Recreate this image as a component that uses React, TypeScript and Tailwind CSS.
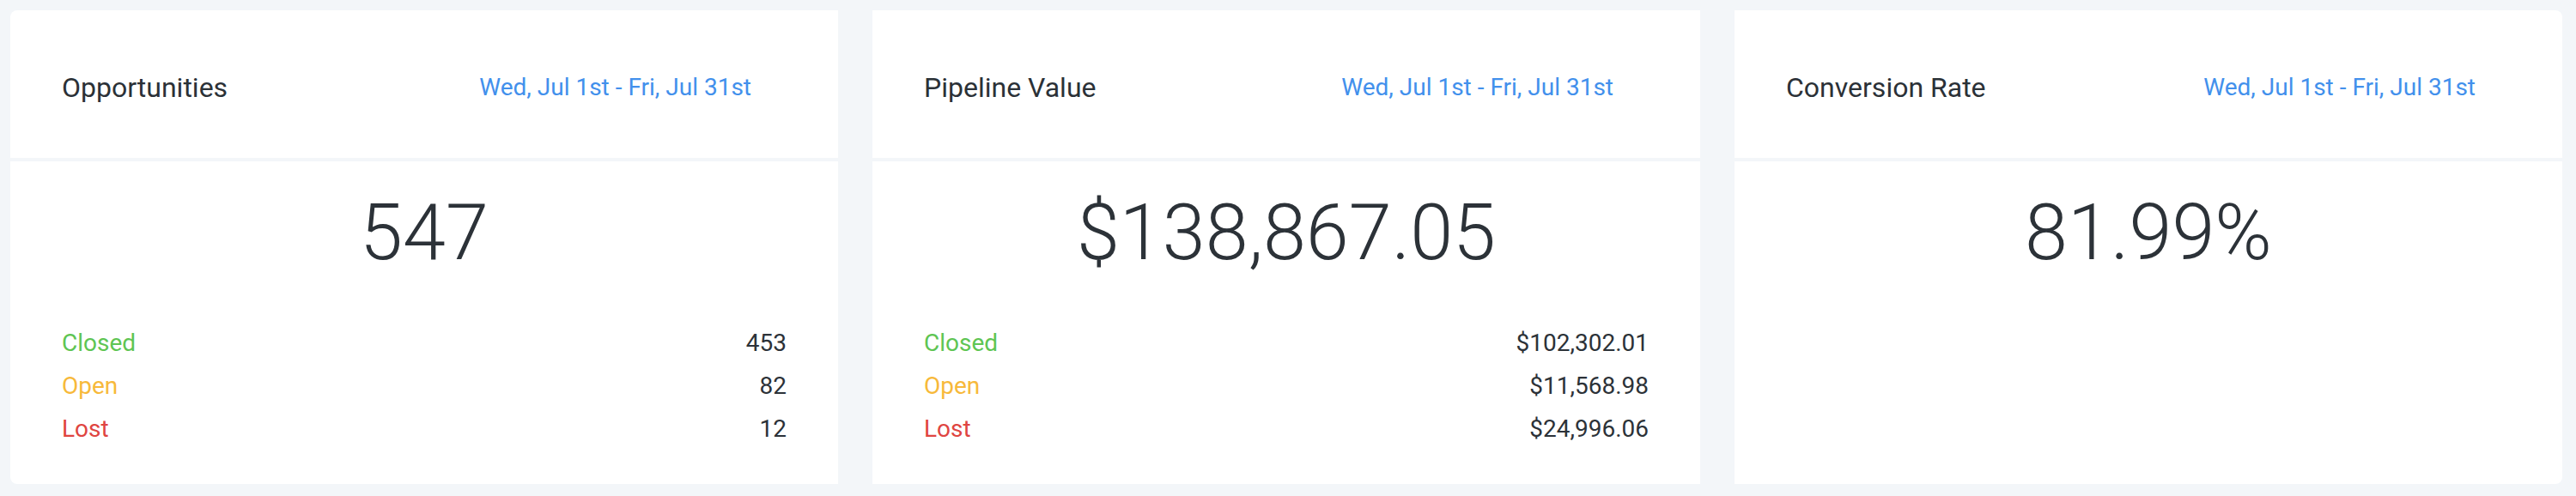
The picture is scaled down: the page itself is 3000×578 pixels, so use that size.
interface Row {
  label: string;
  value: string;
  color: string;
}

interface StatCard {
  title: string;
  range: string;
  total: string;
  rows: Row[];
}

const cards: StatCard[] = [
  {
    title: "Opportunities",
    range: "Wed, Jul 1st - Fri, Jul 31st",
    total: "547",
    rows: [
      { label: "Closed", value: "453", color: "text-[#5ec553]" },
      { label: "Open", value: "82", color: "text-[#f7b93a]" },
      { label: "Lost", value: "12", color: "text-[#df4541]" },
    ],
  },
  {
    title: "Pipeline Value",
    range: "Wed, Jul 1st - Fri, Jul 31st",
    total: "$138,867.05",
    rows: [
      { label: "Closed", value: "$102,302.01", color: "text-[#5ec553]" },
      { label: "Open", value: "$11,568.98", color: "text-[#f7b93a]" },
      { label: "Lost", value: "$24,996.06", color: "text-[#df4541]" },
    ],
  },
  {
    title: "Conversion Rate",
    range: "Wed, Jul 1st - Fri, Jul 31st",
    total: "81.99%",
    rows: [],
  },
];

export default function App() {
  return (
    <div className="w-[3000px] h-[578px] bg-[#f3f6f9] pt-[12px] pl-[12px] pr-[16px] font-['Roboto',sans-serif]">
      <div className="grid grid-cols-3 gap-[40px] h-[552px]">
        {cards.map((c, i) => (
          <div key={c.title} className="flex flex-col gap-[4px]">
            <div
              className={`h-[172px] bg-white flex items-center justify-between pt-[8px] pl-[60px] pr-[101px] ${
                i === 0 ? "rounded-tl-[8px]" : i === 2 ? "rounded-tr-[8px]" : ""
              }`}
            >
              <span className="text-[32px] leading-[38px] text-[#2b3137]">{c.title}</span>
              <span className="text-[28px] leading-[34px] text-[#4290ec]">{c.range}</span>
            </div>
            <div
              className={`flex-1 bg-white flex flex-col px-[60px] pt-[34px] ${
                i === 0 ? "rounded-bl-[8px]" : i === 2 ? "rounded-br-[8px]" : ""
              }`}
            >
              <div className="text-center text-[90px] leading-[100px] font-light text-[#2c3238]">{c.total}</div>
              {c.rows.length > 0 && (
                <div className="mt-[53px] flex flex-col">
                  {c.rows.map(r => (
                    <div key={r.label} className="flex justify-between h-[50px] leading-[50px] text-[28px]">
                      <span className={r.color}>{r.label}</span>
                      <span className="text-[#2c3238]">{r.value}</span>
                    </div>
                  ))}
                </div>
              )}
            </div>
          </div>
        ))}
      </div>
    </div>
  );
}
